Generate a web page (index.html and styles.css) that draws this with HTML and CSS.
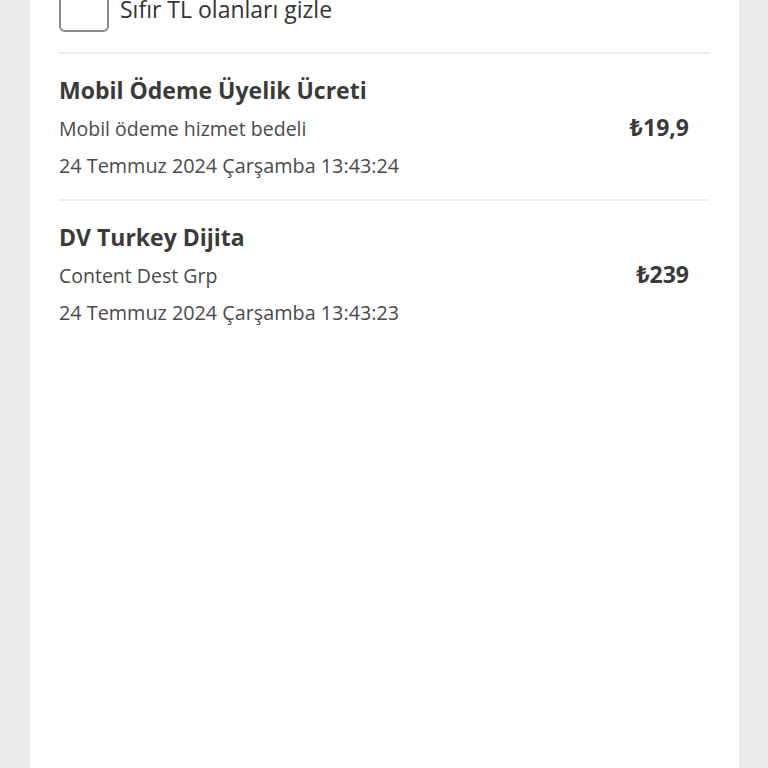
FILE: index.html
```html
<!DOCTYPE html>
<html lang="tr">
<head>
<meta charset="utf-8">
<link rel="stylesheet" href="styles.css">
</head>
<body>
<div class="card">
  <div class="filter">
    <span class="checkbox"></span>
    <span class="filter-label">Sıfır TL olanları gizle</span>
  </div>
  <div class="item">
    <div class="info">
      <div class="title">Mobil Ödeme Üyelik Ücreti</div>
      <div class="sub">Mobil ödeme hizmet bedeli</div>
      <div class="date">24 Temmuz 2024 Çarşamba 13:43:24</div>
    </div>
    <div class="amount">₺19,9</div>
  </div>
  <div class="item">
    <div class="info">
      <div class="title">DV Turkey Dijita</div>
      <div class="sub">Content Dest Grp</div>
      <div class="date">24 Temmuz 2024 Çarşamba 13:43:23</div>
    </div>
    <div class="amount">₺239</div>
  </div>
</div>
</body>
</html>
```

FILE: styles.css
```css
html, body {
  margin: 0;
  padding: 0;
  height: 100%;
  overflow: hidden;
}
body {
  background: #ebebeb;
  font-family: "Open Sans", "Noto Sans", sans-serif;
  color: #3c3c3c;
}
.card {
  background: #ffffff;
  margin-left: 30px;
  width: 709px;
  height: 800px;
  padding: 0 29px;
  box-sizing: border-box;
}
.filter {
  display: flex;
  align-items: center;
  gap: 11px;
  margin-top: -18px;
  height: 50px;
  padding-bottom: 20px;
  border-bottom: 2px solid #ececec;
}
.checkbox {
  width: 50px;
  height: 50px;
  box-sizing: border-box;
  border: 2px solid #8a8a8a;
  border-radius: 6px;
  flex: none;
}
.filter-label {
  font-size: 23px;
  color: #333;
  margin-top: 4px;
}
.item {
  display: flex;
  align-items: center;
  justify-content: space-between;
  padding: 16px 21px 15px 0;
  border-bottom: 2px solid #ececec;
}
.item:last-child {
  border-bottom: none;
}
.info {
  display: flex;
  flex-direction: column;
}
.title {
  font-size: 23px;
  font-weight: 700;
  color: #3a3a3a;
  line-height: 40px;
}
.sub {
  font-size: 19.5px;
  color: #4a4a4a;
  line-height: 38px;
}
.date {
  font-size: 19.8px;
  color: #4a4a4a;
  line-height: 36px;
}
.amount {
  font-size: 23px;
  font-weight: 700;
  color: #3a3a3a;
}
```
